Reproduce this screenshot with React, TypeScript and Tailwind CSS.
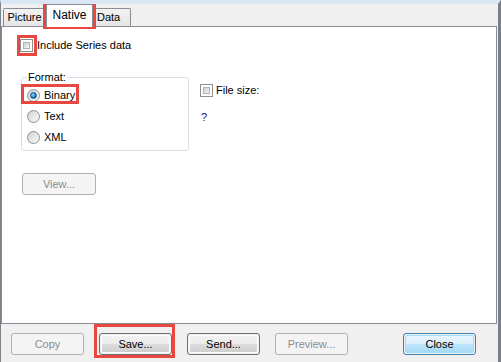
import React from 'react';

const font = { fontFamily: '"Liberation Sans", Arial, sans-serif' };

function Checkbox() {
  return (
    <span className="block w-[13px] h-[13px] border border-[#8e8f8f] bg-white p-[2px] shrink-0">
      <span className="block w-full h-full bg-gradient-to-br from-[#cbcfd5] to-[#f6f6f6] border border-[#b2b2b2]" />
    </span>
  );
}

function Radio({ checked = false }: { checked?: boolean }) {
  return (
    <span className="flex items-center justify-center w-[13px] h-[13px] rounded-full border border-[#8e8f8f] bg-gradient-to-br from-[#d0d3d8] to-[#f9f9f9] shrink-0">
      {checked && (
        <span className="block w-[7px] h-[7px] rounded-full bg-[radial-gradient(circle_at_35%_35%,#8fd3fb,#1e78c2_60%,#0c4f86)] border border-[#17558a]" />
      )}
    </span>
  );
}

function Button({
  label,
  disabled = false,
  primary = false,
  className = '',
}: {
  label: string;
  disabled?: boolean;
  primary?: boolean;
  className?: string;
}) {
  if (disabled) {
    return (
      <div
        className={`h-[22px] w-[73px] rounded-[3px] border border-[#adb2b5] bg-[#f4f4f4] flex items-center justify-center text-[#8d8d8d] shrink-0 ${className}`}
      >
        {label}
      </div>
    );
  }
  if (primary) {
    return (
      <div
        className={`h-[22px] w-[73px] rounded-[3px] border border-[#3c7fb1] p-px shrink-0 ${className}`}
      >
        <div className="h-full w-full rounded-[2px] border border-[#9fdcfb] bg-[linear-gradient(#e9f6fd_0%,#d7effc_50%,#bde6fd_51%,#a6d9f4_100%)] flex items-center justify-center text-black">
          {label}
        </div>
      </div>
    );
  }
  return (
    <div
      className={`h-[22px] w-[73px] rounded-[3px] border border-[#707070] p-px shrink-0 ${className}`}
    >
      <div className="h-full w-full rounded-[2px] border border-[#fbfbfb] bg-[linear-gradient(#f2f2f2_0%,#ebebeb_50%,#dddddd_51%,#cfcfcf_100%)] flex items-center justify-center text-black">
        {label}
      </div>
    </div>
  );
}

export default function App() {
  return (
    <div
      className="relative w-[501px] h-[362px] bg-[#f0f0f0] border-t-4 border-t-[#d9e6f4] border-l border-l-[#7d828a] border-r-[3px] border-r-[#7a7f87] flex flex-col text-[11px] text-black overflow-hidden"
      style={font}
    >
      {/* Tabs */}
      <div className="flex items-end h-[22px] pl-[2px]">
        <div className="h-[18px] w-[43px] border border-b-0 border-[#898c95] rounded-t-[2px] bg-[linear-gradient(#f2f2f2,#e5e5e5)] flex items-center justify-center">
          Picture
        </div>
        <div className="relative z-10 h-[23px] -mb-px w-[47px] border border-b-0 border-[#898c95] rounded-t-[2px] bg-white flex items-center justify-center pb-[2px] text-[12px]">
          Native
        </div>
        <div className="h-[18px] w-[38px] border border-b-0 border-l-0 border-[#898c95] rounded-t-[2px] bg-[linear-gradient(#f2f2f2,#e5e5e5)] flex items-center pl-[4px]">
          Data
        </div>
      </div>

      {/* Panel */}
      <div className="w-[496px] h-[298px] bg-white border border-[#898c95] pl-[18px] pt-[12px] flex flex-col">
        <div className="flex items-center gap-[4px] h-[13px]">
          <Checkbox />
          <span>Include Series data</span>
        </div>

        <div className="flex mt-[25px] ml-px">
          <div className="relative w-[168px] h-[74px] border border-[#d5dfe5] rounded-[3px] pl-[5px] pt-[11px] flex flex-col gap-[8px]">
            <span className="absolute -top-[8px] left-[5px] bg-white px-px leading-[14px]">Format:</span>
            <div className="flex items-center gap-[4px] h-[13px]">
              <Radio checked />
              <span>Binary</span>
            </div>
            <div className="flex items-center gap-[4px] h-[13px]">
              <Radio />
              <span>Text</span>
            </div>
            <div className="flex items-center gap-[4px] h-[13px]">
              <Radio />
              <span>XML</span>
            </div>
            <div className="absolute -left-px top-[6px] w-[58px] h-[20px] border-[3px] border-[#e8483f]" />
          </div>

          <div className="ml-[11px] mt-[7px] flex flex-col">
            <div className="flex items-center gap-[3px] h-[13px]">
              <Checkbox />
              <span>File size:</span>
            </div>
            <span className="mt-[12px] ml-px text-[#2b1166]">?</span>
          </div>
        </div>

        <div className="mt-[22px] ml-[2px]">
          <Button label="View..." disabled className="w-[74px]" />
        </div>
      </div>

      {/* Bottom buttons */}
      <div className="flex items-center mt-[9px] pl-[10px]">
        <Button label="Copy" disabled />
        <Button label="Save..." className="ml-[15px]" />
        <Button label="Send..." className="ml-[15px]" />
        <Button label="Preview..." disabled className="ml-[15px]" />
        <Button label="Close" primary className="ml-[55px]" />
      </div>

      {/* Annotation highlights */}
      <div className="absolute left-[42px] -top-px w-[53px] h-[26px] border-[3px] border-[#e8483f] pointer-events-none" />
      <div className="absolute left-[16px] top-[31px] w-[20px] h-[21px] border-[3px] border-[#e8483f] pointer-events-none" />
      <div className="absolute left-[93px] top-[320px] w-[81px] h-[34px] border-[3px] border-[#e8483f] pointer-events-none" />
    </div>
  );
}
